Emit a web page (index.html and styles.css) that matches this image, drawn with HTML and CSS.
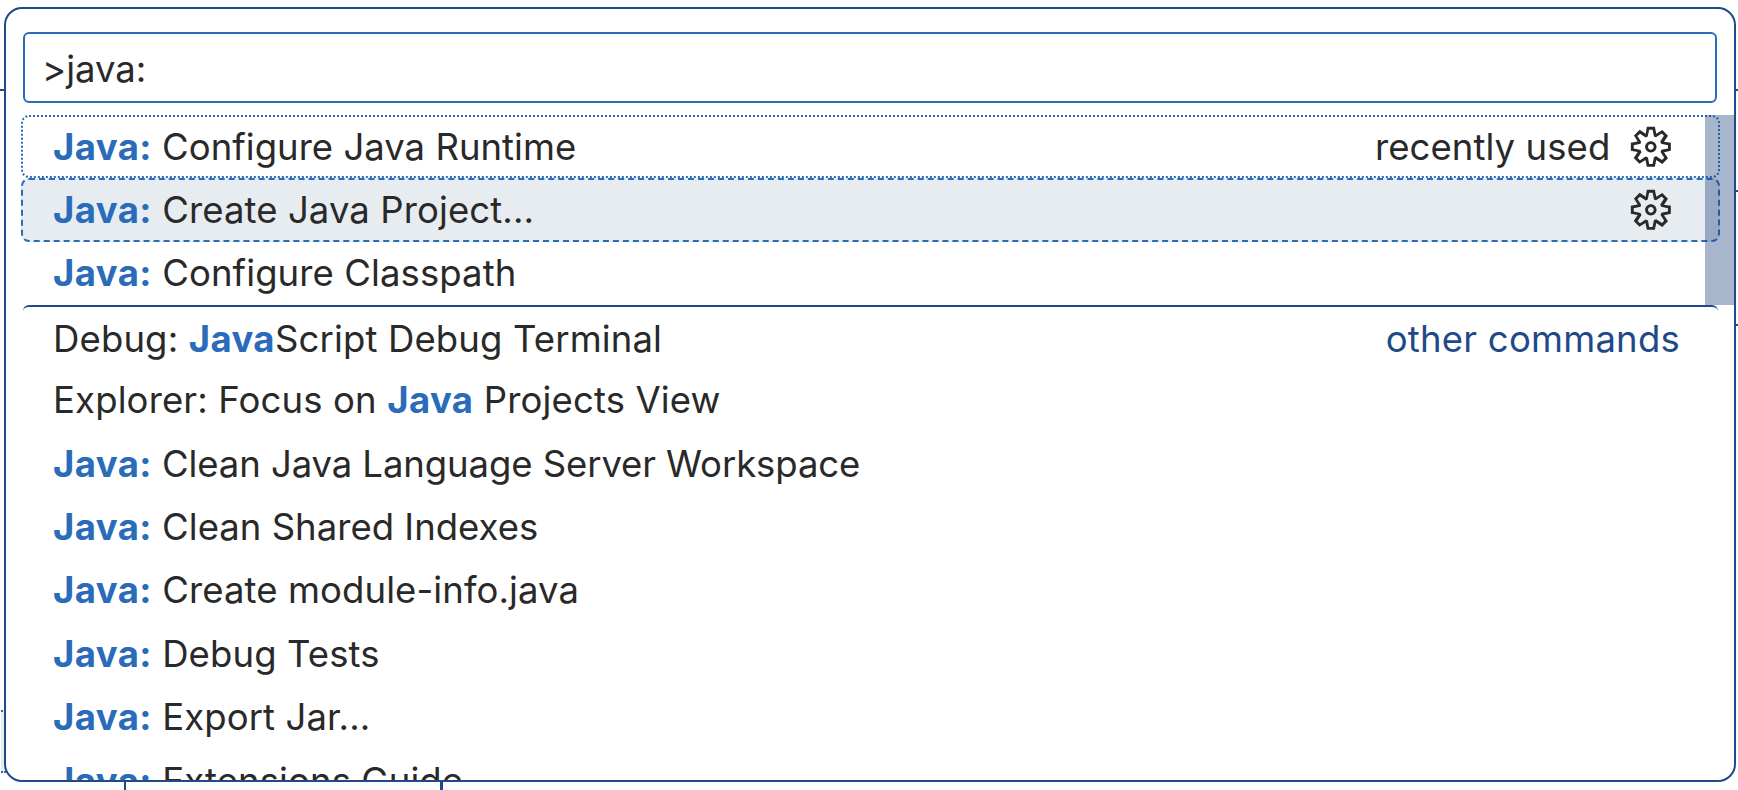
FILE: index.html
```html
<!DOCTYPE html>
<html lang="en">
<head>
<meta charset="utf-8">
<title>Command Palette</title>
<link rel="stylesheet" href="styles.css">
</head>
<body>
<svg width="0" height="0" class="defs"><symbol id="gear" viewBox="0 0 16 16"><path fill-rule="evenodd" clip-rule="evenodd" d="M9.1 4.4L8.6 2H7.4l-.5 2.4-.7.3-2-1.3-.9.8 1.3 2-.2.7-2.4.5v1.2l2.4.5.3.8-1.3 2 .8.8 2-1.3.8.3.4 2.3h1.2l.5-2.4.8-.3 2 1.3.8-.8-1.3-2 .3-.8 2.3-.4V7.4l-2.4-.5-.3-.8 1.3-2-.8-.8-2 1.3-.7-.2zM9.4 1l.5 2.4L12 2.1l2 2-1.4 2.1 2.4.4v2.8l-2.4.5L14 12l-2 2-2.1-1.4-.5 2.4H6.6l-.5-2.4L4 13.9l-2-2 1.4-2.1L1 9.4V6.6l2.4-.5L2.1 4l2-2 2.1 1.4.4-2.4h2.8zm.6 7c0 1.1-.9 2-2 2s-2-.9-2-2 .9-2 2-2 2 .9 2 2zM8 9c.6 0 1-.4 1-1s-.4-1-1-1-1 .4-1 1 .4 1 1 1z"/></symbol></svg>
<div class="workbench">
  <i class="edge title-line"></i>
  <i class="edge tab-line"></i>
  <i class="edge crumb-line"></i>
  <i class="edge split-a"></i>
  <i class="edge split-b"></i>
  <i class="tree-item"></i>
</div>
<main class="palette">
  <div class="input">&gt;java:</div>
  <ul class="list">
    <li class="row hover"><span class="label even"><b>Java:</b> Configure Java Runtime</span><span class="note">recently used</span><svg class="gear"><use href="#gear"/></svg></li>
    <li class="row focused"><span class="label"><b>Java:</b> Create Java Project...</span><svg class="gear"><use href="#gear"/></svg></li>
    <li class="row"><span class="label"><b>Java:</b> Configure Classpath</span></li>
    <li class="row separated"><span class="label wide">Debug: <b>Java</b>Script Debug Terminal</span><span class="note group">other commands</span></li>
    <li class="row"><span class="label wide">Explorer: Focus on <b>Java</b> Projects View</span></li>
    <li class="row"><span class="label tight"><b>Java:</b> Clean Java Language Server Workspace</span></li>
    <li class="row"><span class="label even"><b>Java:</b> Clean Shared Indexes</span></li>
    <li class="row"><span class="label"><b>Java:</b> Create module-info.java</span></li>
    <li class="row"><span class="label"><b>Java:</b> Debug Tests</span></li>
    <li class="row"><span class="label"><b>Java:</b> Export Jar...</span></li>
    <li class="row"><span class="label"><b>Java:</b> Extensions Guide</span></li>
  </ul>
  <div class="scrollbar"></div>
</main>
</body>
</html>
```
FILE: styles.css
```css
* { box-sizing: border-box; }
body {
  margin: 0;
  width: 1738px;
  height: 790px;
  overflow: hidden;
  position: relative;
  background: #fff;
  color: #292929;
  font-family: Inter, sans-serif;
  font-size: 36.5px;
  padding: 7px 2px 8px 4px;
}
.defs { position: absolute; }

/* Parts of the window visible behind the palette */
.edge { position: absolute; background: #1f4a87; }
.title-line { left: 0; top: 89px; width: 1738px; height: 2px; }
.tab-line { right: 0; top: 190px; width: 10px; height: 2px; }
.crumb-line { right: 0; top: 324px; width: 10px; height: 2px; }
.split-a { left: 124px; bottom: 0; width: 2px; height: 12px; }
.split-b { left: 440px; bottom: 0; width: 3px; height: 12px; }
.tree-item {
  position: absolute;
  left: 1px;
  top: 710px;
  width: 8px;
  height: 63px;
  background: #e7ecf0;
  border: 2px dotted #2a6cba;
  border-width: 2px 0;
}

.palette {
  position: relative;
  height: 775px;
  padding: 23px 12px 0 15px;
  overflow: hidden;
  background: #fff;
  border: 2px solid #1f4a87;
  border-radius: 18px;
}
.input {
  height: 71px;
  margin: 0 5px 12px 2px;
  padding-left: 17px;
  border: 2px solid #2a6cba;
  border-radius: 6px;
  line-height: 70px;
}
.list { list-style: none; margin: 0; padding: 0 2px 0 0; }
.row {
  display: flex;
  align-items: center;
  height: 63.4px;
  padding: 0 44px 0 30px;
  border: 2px solid transparent;
  border-radius: 8px;
  white-space: nowrap;
  line-height: 60px;
}
.label { flex: 1; letter-spacing: 0.1px; }
.even { letter-spacing: 0.02px; }
.wide { letter-spacing: 0.14px; }
.tight { letter-spacing: -0.09px; }
.row b { color: #2a6cba; font-weight: 700; letter-spacing: 0.4px; }
.note { letter-spacing: 0.08px; }
.hover { border: 2px dotted #2a6cba; }
.focused { border: 2px dashed #2a6cba; background: #e7ecf0; }
.separated {
  margin: 0 2px 0 2px;
  padding: 3px 38px 0 30px;
  border-width: 2px 0 0;
  border-top-color: #1f4a87;
  border-radius: 6px;
}
.group { color: #1f4a87; letter-spacing: 0.23px; }
.gear { width: 45.7px; height: 45.7px; margin-left: 18px; fill: #292929; }
.scrollbar {
  position: absolute;
  right: 0;
  top: 106px;
  width: 29px;
  height: 190px;
  background: rgba(35, 70, 130, 0.4);
}
```
